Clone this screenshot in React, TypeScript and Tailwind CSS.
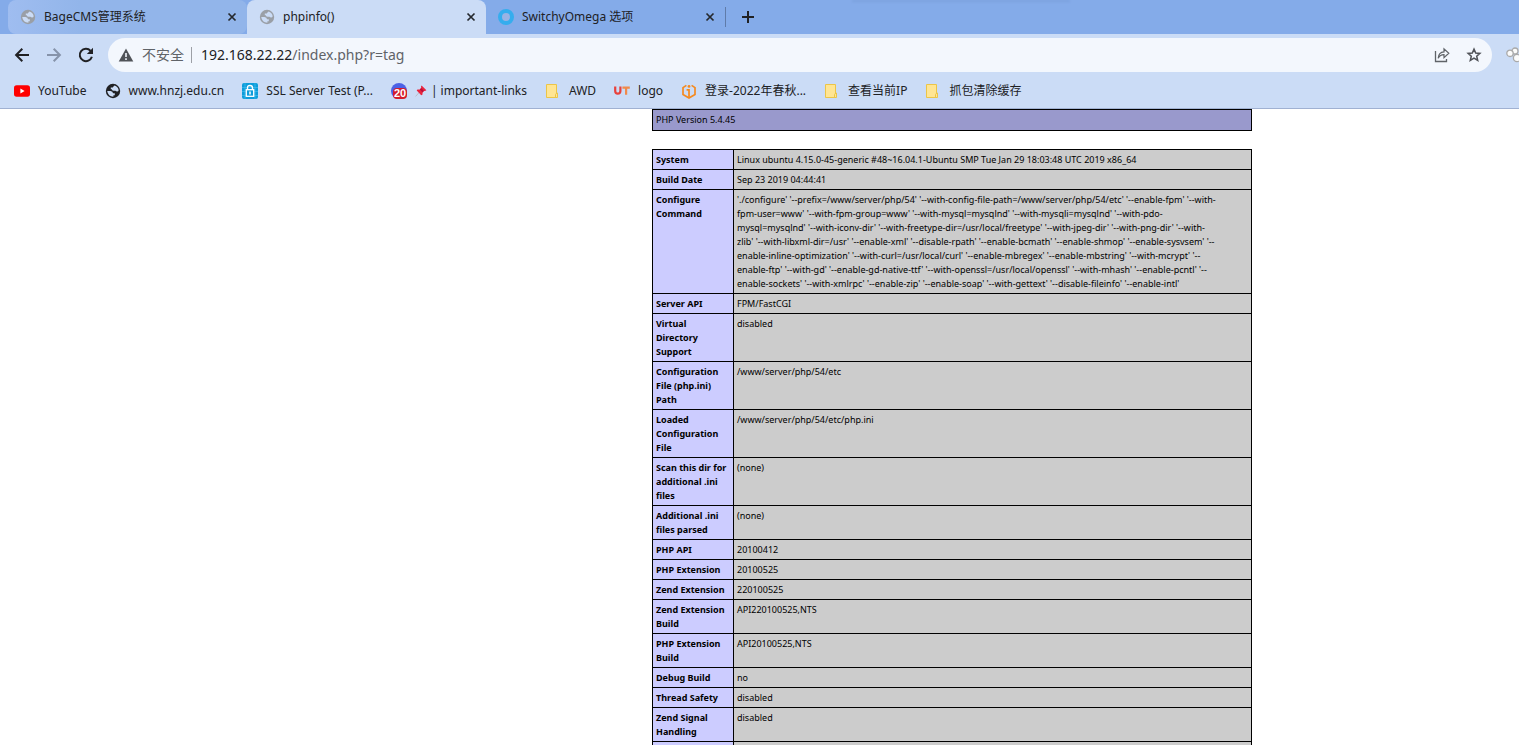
import type { ReactNode } from "react";

function Globe({ className }: { className: string }) {
  return (
    <svg viewBox="0 0 16 16" className={className} aria-hidden="true">
      <circle cx="8" cy="8" r="7.2" fill="currentColor" />
      <path
        d="M2.2 8 H5.4 Q8 8.2 8 10.2 H9.8 V12.2 H8.4 V13.7 Q3 13.6 2.2 8 Z M9.6 2.6 Q13 3.6 13.7 7.2 Q13.2 8.8 11.8 8.6 L10.4 7.8 H8.4 Q6.8 7.6 6.8 6.2 H5.8 V4.6 H7.8 Q8.2 3.4 9.6 2.6 Z"
        className="fill-[#cbdcf6]"
      />
    </svg>
  );
}

function Close() {
  return (
    <svg viewBox="0 0 10 10" className="size-[10px]" aria-hidden="true">
      <path d="M1.5 1.5 L8.5 8.5 M8.5 1.5 L1.5 8.5" stroke="#25282d" strokeWidth="1.7" fill="none" />
    </svg>
  );
}

function Folder() {
  return (
    <svg viewBox="0 0 16 16" className="size-4 shrink-0" aria-hidden="true">
      <path d="M1.5 1.5 H11.5 V10 H12.5 V14.5 H1.5 Z" fill="#ffe593" stroke="#ecc547" />
      <path d="M10.5 14 V11.5 Q10.6 10.5 12 10.4" fill="none" stroke="#ecc547" />
    </svg>
  );
}

function YouTube() {
  return (
    <svg viewBox="0 0 16 16" className="size-4 shrink-0" aria-hidden="true">
      <rect x="0" y="2.3" width="16" height="11.4" rx="2.6" fill="#f00" />
      <path d="M6.4 5.6 L10.6 8 L6.4 10.4 Z" fill="#fff" />
    </svg>
  );
}

function SslLock() {
  return (
    <svg viewBox="0 0 16 16" className="size-4 shrink-0" aria-hidden="true">
      <rect width="16" height="16" rx="2" fill="#0d9ddb" />
      <path d="M0 4.5 H16 M0 8.5 H16 M0 12.5 H16 M3 0 V16 M13 0 V16" stroke="#4cc0ee" strokeWidth="0.6" />
      <path d="M5.5 7 V4.8 Q5.5 2.5 8 2.5 T10.5 4.8 V7" fill="none" stroke="#fff" strokeWidth="1.4" />
      <rect x="4.3" y="6.7" width="7.4" height="6.6" fill="#0d9ddb" stroke="#fff" strokeWidth="1.3" />
      <path d="M8 8.5 V11.5" stroke="#fff" strokeWidth="1.5" />
    </svg>
  );
}

function Calendar() {
  return (
    <span className="relative size-4 shrink-0 rounded-full bg-[#4b62e6]">
      <span className="absolute top-[5px] left-0.5 rounded-sm bg-[#d51c2a] px-px font-['Liberation_Sans',sans-serif] text-[11px] leading-[11px] font-bold text-white">
        20
      </span>
    </span>
  );
}

function Pin() {
  return (
    <svg viewBox="0 0 12 12" className="size-3 shrink-0" aria-hidden="true">
      <path d="M0.6 11.4 L4.4 7.2" stroke="#b8bcc6" strokeWidth="1" />
      <path d="M6.6 0.6 L11.4 5.2 L10 6 L9 5.9 L7.6 7.6 L7.4 9.8 L6.2 10.3 L1.7 5.6 L2.4 4.6 L4.7 4.5 L6.2 3 L6 1.6 Z" fill="#e9243d" />
      <path d="M6.2 3 L8.9 5.8 L7.6 7.4 L4.8 4.6 Z" fill="#b90f3c" />
    </svg>
  );
}

function UtLogo() {
  return (
    <svg viewBox="0 0 16 16" className="size-4 shrink-0" aria-hidden="true">
      <path d="M1.2 3.5 V8 Q1.2 10.6 3.8 10.6 T6.4 8 V3.5" fill="none" stroke="#e8413c" strokeWidth="2.2" />
      <path d="M8.4 4.6 H15.8 M12.1 4.6 V11.8" fill="none" stroke="#f08a4b" strokeWidth="2.2" />
    </svg>
  );
}

function HexLogo() {
  return (
    <svg viewBox="0 0 16 16" className="size-4 shrink-0" aria-hidden="true">
      <path d="M5.4 2.4 L2 4.6 V11.4 L8 14.9 L14 11.4 V4.6 L10.6 2.4" fill="none" stroke="#f58a1f" strokeWidth="1.7" />
      <path d="M5.6 6.9 H8 V14" fill="none" stroke="#f58a1f" strokeWidth="1.7" />
      <circle cx="8" cy="3.4" r="1.4" fill="#f58a1f" />
    </svg>
  );
}

const bookmarks: { label: string; icon: ReactNode; pin?: boolean }[] = [
  { label: "YouTube", icon: <YouTube /> },
  { label: "www.hnzj.edu.cn", icon: <Globe className="size-4 shrink-0 text-[#202124]" /> },
  { label: "SSL Server Test (P...", icon: <SslLock /> },
  { label: "| important-links", icon: <Calendar />, pin: true },
  { label: "AWD", icon: <Folder /> },
  { label: "logo", icon: <UtLogo /> },
  { label: "登录-2022年春秋...", icon: <HexLogo /> },
  { label: "查看当前IP", icon: <Folder /> },
  { label: "抓包清除缓存", icon: <Folder /> },
];

const rows: [string, string[]][] = [
  ["System", ["Linux ubuntu 4.15.0-45-generic #48~16.04.1-Ubuntu SMP Tue Jan 29 18:03:48 UTC 2019 x86_64"]],
  ["Build Date", ["Sep 23 2019 04:44:41"]],
  [
    "Configure Command",
    [
      "'./configure' '--prefix=/www/server/php/54' '--with-config-file-path=/www/server/php/54/etc' '--enable-fpm' '--with-",
      "fpm-user=www' '--with-fpm-group=www' '--with-mysql=mysqlnd' '--with-mysqli=mysqlnd' '--with-pdo-",
      "mysql=mysqlnd' '--with-iconv-dir' '--with-freetype-dir=/usr/local/freetype' '--with-jpeg-dir' '--with-png-dir' '--with-",
      "zlib' '--with-libxml-dir=/usr' '--enable-xml' '--disable-rpath' '--enable-bcmath' '--enable-shmop' '--enable-sysvsem' '--",
      "enable-inline-optimization' '--with-curl=/usr/local/curl' '--enable-mbregex' '--enable-mbstring' '--with-mcrypt' '--",
      "enable-ftp' '--with-gd' '--enable-gd-native-ttf' '--with-openssl=/usr/local/openssl' '--with-mhash' '--enable-pcntl' '--",
      "enable-sockets' '--with-xmlrpc' '--enable-zip' '--enable-soap' '--with-gettext' '--disable-fileinfo' '--enable-intl'",
    ],
  ],
  ["Server API", ["FPM/FastCGI"]],
  ["Virtual Directory Support", ["disabled"]],
  ["Configuration File (php.ini) Path", ["/www/server/php/54/etc"]],
  ["Loaded Configuration File", ["/www/server/php/54/etc/php.ini"]],
  ["Scan this dir for additional .ini files", ["(none)"]],
  ["Additional .ini files parsed", ["(none)"]],
  ["PHP API", ["20100412"]],
  ["PHP Extension", ["20100525"]],
  ["Zend Extension", ["220100525"]],
  ["Zend Extension Build", ["API220100525,NTS"]],
  ["PHP Extension Build", ["API20100525,NTS"]],
  ["Debug Build", ["no"]],
  ["Thread Safety", ["disabled"]],
  ["Zend Signal Handling", ["disabled"]],
  ["", [""]],
];

function Tab({ title, icon, className }: { title: string; icon: ReactNode; className: string }) {
  return (
    <div className={`flex h-[34px] w-[239px] items-center pr-2.5 pl-3 ${className}`}>
      {icon}
      <span className="ml-2 flex-1 truncate">{title}</span>
      <button type="button" aria-label="Close tab" className="flex size-[10px] items-center">
        <Close />
      </button>
    </div>
  );
}

export default function App() {
  return (
    <div className="flex h-screen flex-col overflow-hidden bg-white font-['Noto_Sans','Noto_Sans_CJK_SC',sans-serif] text-xs text-[#202124]">
      <header className="shrink-0 border-b border-[#a0b1d2] bg-[#cbdcf6]">
        <div className="relative flex h-[34px] items-center bg-[#84abe9] pl-2">
          <div className="absolute top-0 left-[852px] h-0.5 w-[218px] rounded-full bg-[#7ba1de] blur-[1px]" />
          <Tab
            title="BageCMS管理系统"
            icon={<Globe className="size-4 shrink-0 text-[#9a9fa6]" />}
            className="rounded-lg bg-linear-to-r from-[#9fbdf0] to-[#92b5ea] to-30%"
          />
          <Tab
            title="phpinfo()"
            icon={<Globe className="size-4 shrink-0 text-[#9a9fa6]" />}
            className="rounded-t-lg bg-[#cbdcf6]"
          />
          <Tab
            title="SwitchyOmega 选项"
            icon={
              <svg viewBox="0 0 16 16" className="size-4 shrink-0" aria-hidden="true">
                <circle cx="8" cy="8" r="6" fill="#99b3e4" stroke="#35adee" strokeWidth="4" />
              </svg>
            }
            className="rounded-bl-lg"
          />
          <div className="mr-4 h-5 w-px bg-[#5f7ba9]" />
          <button type="button" aria-label="New tab">
            <svg viewBox="0 0 12 12" className="size-3" aria-hidden="true">
              <path d="M6 0 V12 M0 6 H12" stroke="#202124" strokeWidth="2" />
            </svg>
          </button>
        </div>

        <div className="flex h-[42px] items-center pl-3.5">
          <div className="flex w-[94px] shrink-0 items-center gap-4">
            <button type="button" aria-label="Back">
              <svg viewBox="0 0 16 16" className="size-4" aria-hidden="true">
                <path d="M15 8 H2.4 M8.3 1.8 L2.1 8 L8.3 14.2" fill="none" stroke="#202124" strokeWidth="2" />
              </svg>
            </button>
            <button type="button" aria-label="Forward">
              <svg viewBox="0 0 16 16" className="size-4" aria-hidden="true">
                <path d="M1 8 H13.6 M7.7 1.8 L13.9 8 L7.7 14.2" fill="none" stroke="#8693aa" strokeWidth="2" />
              </svg>
            </button>
            <button type="button" aria-label="Reload">
              <svg viewBox="0 0 16 16" className="size-4" aria-hidden="true">
                <path d="M13.9 9.8 A6.2 6.2 0 1 1 12.6 3.8" fill="none" stroke="#202124" strokeWidth="2" />
                <path d="M15 0.8 V7 H8.8 Z" fill="#202124" />
              </svg>
            </button>
          </div>
          <div className="flex h-[34px] flex-1 items-center rounded-full bg-[#f3f7fd] px-2.5">
            <svg viewBox="0 0 16 16" className="size-4 shrink-0" aria-hidden="true">
              <path d="M8 1.5 L15.3 14.5 H0.7 Z" fill="#505358" />
              <path d="M8 6 V10 M8 11.2 V13" stroke="#f3f7fd" strokeWidth="1.6" />
            </svg>
            <span className="ml-2 text-sm text-[#5f6368]">不安全</span>
            <span className="mr-[9px] ml-[7px] h-4 w-px bg-[#9da0a6]" />
            <a href="#url" className="flex-1 text-sm text-[#5f6368]">
              <span className="text-[#202124]">192.168.22.22</span>/index.php?r=tag
            </a>
            <button type="button" aria-label="Share" className="mr-4">
              <svg viewBox="0 0 16 16" className="size-4" aria-hidden="true">
                <path d="M1.5 4 V14.5 H12.5 V12" fill="none" stroke="#5f6368" strokeWidth="1.3" />
                <path d="M4.2 11.3 Q4.6 5.2 10 4.9 V1.9 L14.8 6.3 L10 10.6 V7.7 Q6.3 7.6 4.2 11.3 Z" fill="none" stroke="#5f6368" strokeWidth="1.2" />
              </svg>
            </button>
            <button type="button" aria-label="Bookmark this page">
              <svg viewBox="0 0 16 16" className="size-4" aria-hidden="true">
                <path
                  d="M8 2.1 L9.7 6 L13.9 6.4 L10.7 9.2 L11.7 13.4 L8 11.2 L4.3 13.4 L5.3 9.2 L2.1 6.4 L6.3 6 Z"
                  fill="none"
                  stroke="#505358"
                  strokeWidth="1.5"
                />
              </svg>
            </button>
          </div>
          <svg viewBox="0 0 13 16" className="ml-3.5 h-4 w-[13px] shrink-0" aria-hidden="true">
            <g fill="#fbfbfb" stroke="#a9a9a9" strokeWidth="1.3">
              <circle cx="9" cy="4" r="3" />
              <circle cx="4" cy="6.3" r="3.2" />
              <circle cx="11" cy="11" r="3.6" />
            </g>
          </svg>
        </div>

        <nav className="flex h-8 items-center gap-[18px] pb-[3px] pl-3.5">
          {bookmarks.map((b) => (
            <a key={b.label} href="#bookmark" className="flex items-center gap-2 whitespace-nowrap">
              {b.icon}
              <span className="flex items-center gap-1">
                {b.pin && <Pin />}
                {b.label}
              </span>
            </a>
          ))}
        </nav>
      </header>

      <main className="ml-[652px] w-[600px] text-[9px] leading-[14px] text-black">
        <h1 className="mb-[18px] border border-black bg-[#9999cc] p-[3px]">PHP Version 5.4.45</h1>
        <table className="w-full table-fixed border-collapse">
          <tbody>
            {rows.map(([name, lines]) => (
              <tr key={name} className="align-top">
                <th scope="row" className="w-[81px] border border-black bg-[#ccccff] px-[3px] pt-[3px] pb-0.5 text-left font-bold">
                  {name}
                </th>
                <td className="border border-black bg-[#cccccc] px-[3px] pt-[3px] pb-0.5">
                  {lines.map((line) => (
                    <span key={line} className="block">
                      {line}
                    </span>
                  ))}
                </td>
              </tr>
            ))}
          </tbody>
        </table>
      </main>
    </div>
  );
}
